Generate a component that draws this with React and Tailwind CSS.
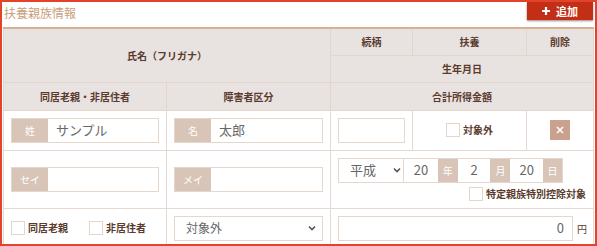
import React from "react";

const F = { fontFamily: '"Noto Sans CJK JP", "Noto Sans", sans-serif' };

function Label({ children, w = "w-[36px]" }) {
  return (
    <div className={`${w} shrink-0 bg-[#d8c5b7] text-white text-[10px] flex items-center justify-center`}>
      {children}
    </div>
  );
}

function Check({ label, className = "" }) {
  return (
    <label className={`flex items-center gap-[3px] ${className}`}>
      <span className="w-[14px] h-[14px] border border-[#e3d6cd] bg-white shrink-0" />
      <span className="text-[10px] font-bold text-[#5a3b2d] leading-none">{label}</span>
    </label>
  );
}

function Chevron({ className = "" }) {
  return (
    <svg className={className} width="8" height="6" viewBox="0 0 8 6">
      <path d="M1 1.5 L4 4.5 L7 1.5" fill="none" stroke="#555" strokeWidth="1.6" />
    </svg>
  );
}

const th = "border border-[#e4d5ca] bg-[#e8e2e1] text-[10px] font-bold text-[#5a3b2d] text-center p-0";
const td = "border border-[#e6d8ce] bg-white p-0 align-middle";

export default function App() {
  return (
    <div style={F} className="w-[597px] h-[246px] border-2 border-[#e2432a] bg-white overflow-hidden">
      <div className="h-[25px] flex justify-between items-start pl-[2px] pr-[2px]">
        <div className="text-[12px] text-[#c9a07b] leading-none mt-[5px]">扶養親族情報</div>
        <button className="w-[66px] h-[18px] bg-[#c22f16] shadow-[0_1px_2px_rgba(60,0,0,0.5)] flex items-center justify-center gap-[6px] text-white text-[11px] font-bold leading-none">
          <svg width="8" height="8" viewBox="0 0 8 8">
            <path d="M4 0 V8 M0 4 H8" stroke="#fff" strokeWidth="2.2" />
          </svg>
          <span>追加</span>
        </button>
      </div>
      <div className="pl-[1px]">
        <table className="table-fixed border-collapse w-[590px] border-t-2 border-t-[#d6b292]">
          <colgroup>
            <col className="w-[163px]" />
            <col className="w-[164px]" />
            <col className="w-[82px]" />
            <col className="w-[114px]" />
            <col className="w-[67px]" />
          </colgroup>
          <tbody>
            <tr className="h-[27px]">
              <td colSpan={2} rowSpan={2} className={`${th} border-t-0`}>氏名（フリガナ）</td>
              <td className={`${th} border-t-0`}>続柄</td>
              <td className={`${th} border-t-0`}>扶養</td>
              <td className={`${th} border-t-0`}>削除</td>
            </tr>
            <tr className="h-[27px]">
              <td colSpan={3} className={th}>生年月日</td>
            </tr>
            <tr className="h-[28px]">
              <td className={th}>同居老親・非居住者</td>
              <td className={th}>障害者区分</td>
              <td colSpan={3} className={th}>合計所得金額</td>
            </tr>
            <tr className="h-[40px]">
              <td className={`${td} px-[7px]`}>
                <div className="flex h-[25px] border border-[#e6d7cc]">
                  <Label>姓</Label>
                  <div className="flex-1 flex items-center pl-[8px] text-[13px] text-[#666]">サンプル</div>
                </div>
              </td>
              <td className={`${td} px-[7px]`}>
                <div className="flex h-[25px] border border-[#e6d7cc]">
                  <Label>名</Label>
                  <div className="flex-1 flex items-center pl-[8px] text-[13px] text-[#666]">太郎</div>
                </div>
              </td>
              <td className={`${td} px-[7px]`}>
                <div className="h-[25px] border border-[#e6d7cc]" />
              </td>
              <td className={td}>
                <div className="flex justify-center">
                  <Check label="対象外" />
                </div>
              </td>
              <td className={td}>
                <div className="flex justify-center">
                  <div className="w-[20px] h-[20px] bg-[#c9a18e] flex items-center justify-center">
                    <svg width="8" height="8" viewBox="0 0 8 8">
                      <path d="M1 1 L7 7 M7 1 L1 7" stroke="#fff" strokeWidth="1.6" />
                    </svg>
                  </div>
                </div>
              </td>
            </tr>
            <tr className="h-[58px]">
              <td className={`${td} px-[7px]`}>
                <div className="flex h-[25px] border border-[#e6d7cc]">
                  <Label>セイ</Label>
                  <div className="flex-1" />
                </div>
              </td>
              <td className={`${td} px-[7px]`}>
                <div className="flex h-[25px] border border-[#e6d7cc]">
                  <Label>メイ</Label>
                  <div className="flex-1" />
                </div>
              </td>
              <td colSpan={3} className={`${td} px-[7px]`}>
                <div className="flex flex-col">
                  <div className="flex h-[25px] w-[225px] border border-[#e6d7cc] text-[13px] text-[#666]">
                    <div className="w-[66px] flex items-center justify-between pl-[11px] pr-[2px] border-r border-[#e6d7cc]">
                      <span>平成</span>
                      <Chevron />
                    </div>
                    <div className="w-[34px] flex items-center justify-center">20</div>
                    <Label w="w-[20px]">年</Label>
                    <div className="w-[33px] flex items-center justify-center">2</div>
                    <Label w="w-[20px]">月</Label>
                    <div className="w-[33px] flex items-center justify-center">20</div>
                    <Label w="w-[19px]">日</Label>
                  </div>
                  <div className="flex justify-end mt-[4px] pr-[0px]">
                    <Check label="特定親族特別控除対象" />
                  </div>
                </div>
              </td>
            </tr>
            <tr className="h-[40px]">
              <td className={`${td} px-[7px]`}>
                <div className="flex items-center">
                  <Check label="同居老親" />
                  <Check label="非居住者" className="ml-[21px]" />
                </div>
              </td>
              <td className={`${td} px-[7px]`}>
                <div className="flex h-[25px] border border-[#e6d7cc] items-center justify-between pl-[11px] pr-[6px] text-[12px] text-[#666]">
                  <span>対象外</span>
                  <Chevron />
                </div>
              </td>
              <td colSpan={3} className={`${td} pl-[7px] pr-[6px]`}>
                <div className="flex items-center">
                  <div className="flex-1 h-[25px] border border-[#e6d7cc] flex items-center justify-end pr-[8px] text-[13px] text-[#666]">0</div>
                  <span className="ml-[4px] text-[10px] text-[#5a3b2d] w-[10px]">円</span>
                </div>
              </td>
            </tr>
          </tbody>
        </table>
      </div>
    </div>
  );
}
